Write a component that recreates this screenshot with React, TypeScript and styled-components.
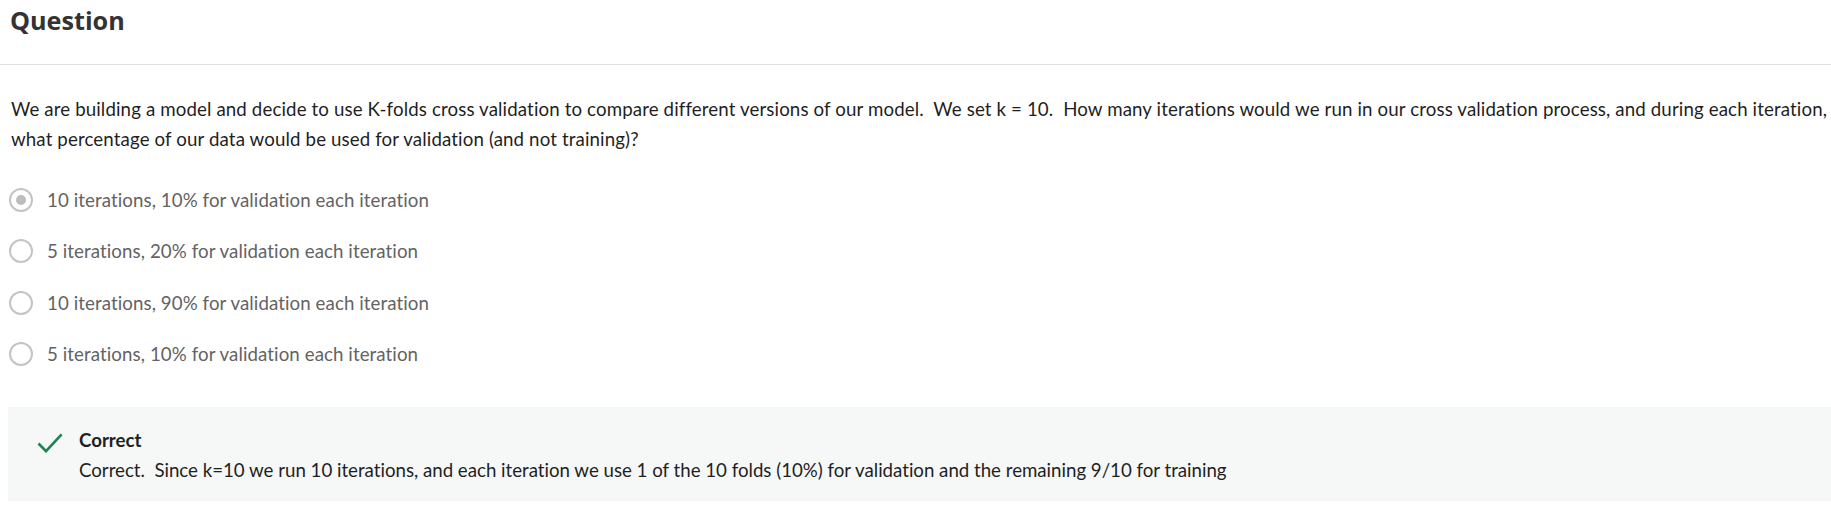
import React from 'react';
import styled, { createGlobalStyle } from 'styled-components';

const GlobalStyle = createGlobalStyle`
  html, body {
    margin: 0;
    padding: 0;
    background: #ffffff;
  }
  body {
    font-family: Lato, "Liberation Sans", sans-serif;
    color: #1f1f1f;
  }
`;

const question =
  'We are building a model and decide to use K-folds cross validation to compare different versions of our model.\u00a0 We set k = 10.\u00a0 How many iterations would we run in our cross validation process, and during each iteration, what percentage of our data would be used for validation (and not training)?';

const explanation =
  'Correct.\u00a0 Since k=10 we run 10 iterations, and each iteration we use 1 of the 10 folds (10%) for validation and the remaining 9/10 for training';

const options = [
  '10 iterations, 10% for validation each iteration',
  '5 iterations, 20% for validation each iteration',
  '10 iterations, 90% for validation each iteration',
  '5 iterations, 10% for validation each iteration',
];

export default function App() {
  const selected = 0;

  return (
    <>
      <GlobalStyle />
      <Page>
        <Header>
          <Title>Question</Title>
        </Header>

        <Content>
          <Prompt>{question}</Prompt>

          <OptionList>
            {options.map((text, i) => (
              <Option key={i}>
                <Radio $checked={i === selected} />
                <OptionText>{text}</OptionText>
              </Option>
            ))}
          </OptionList>

          <Feedback>
            <CheckMark width="26" height="20" viewBox="0 0 26 20">
              <polyline
                points="1.5,10.5 9,18.2 24.6,1.4"
                fill="none"
                stroke="#1f8354"
                strokeWidth="2.6"
              />
            </CheckMark>
            <FeedbackBody>
              <FeedbackTitle>Correct</FeedbackTitle>
              <FeedbackText>{explanation}</FeedbackText>
            </FeedbackBody>
          </Feedback>
        </Content>
      </Page>
    </>
  );
}

const Page = styled.div`
  width: 1831px;
`;

const Header = styled.div`
  padding: 3px 10px 27px;
  border-bottom: 1px solid #e1e1e1;
`;

const Title = styled.h2`
  margin: 0;
  font-family: "Open Sans", sans-serif;
  font-size: 25.2px;
  line-height: 34px;
  font-weight: 700;
  color: #333333;
`;

const Content = styled.div`
  padding: 0 0 0 8px;
`;

const Prompt = styled.p`
  margin: 29px 0 0;
  padding-left: 3px;
  font-size: 18.7px;
  line-height: 30px;
  letter-spacing: 0.12px;
  color: #1f1f1f;
`;

const OptionList = styled.div`
  display: flex;
  flex-direction: column;
  gap: 21.3px;
  margin-top: 31px;
`;

const Option = styled.label`
  display: flex;
  align-items: center;
  gap: 14px;
  height: 30px;
  padding-left: 1px;
`;

const Radio = styled.span<{ $checked?: boolean }>`
  box-sizing: border-box;
  width: 24px;
  height: 24px;
  border-radius: 50%;
  border: 2.5px solid #c4c4c4;
  display: flex;
  align-items: center;
  justify-content: center;
  flex-shrink: 0;

  &::after {
    content: '';
    display: ${p => (p.$checked ? 'block' : 'none')};
    width: 10px;
    height: 10px;
    border-radius: 50%;
    background: #bdbdbd;
  }
`;

const OptionText = styled.span`
  font-size: 18.7px;
  line-height: 30px;
  letter-spacing: 0.08px;
  color: #636363;
`;

const Feedback = styled.div`
  display: flex;
  align-items: flex-start;
  gap: 16px;
  margin-top: 38px;
  padding: 18px 0 16px 29px;
  background: #f5f8f7;
`;

const CheckMark = styled.svg`
  flex-shrink: 0;
  margin-top: 8px;
`;

const FeedbackBody = styled.div`
  display: flex;
  flex-direction: column;
`;

const FeedbackTitle = styled.span`
  font-size: 18.7px;
  line-height: 30px;
  font-weight: 700;
  color: #1f1f1f;
`;

const FeedbackText = styled.span`
  font-size: 18.7px;
  line-height: 30px;
  letter-spacing: -0.015px;
  color: #1f1f1f;
`;
